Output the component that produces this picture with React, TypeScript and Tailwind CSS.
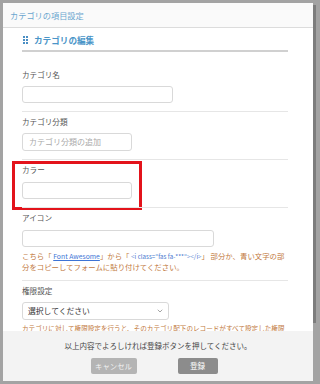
import React from 'react';
import { ChevronDown } from 'lucide-react';

const font = { fontFamily: '"Noto Sans CJK JP", "Noto Sans", sans-serif' };

const Field = ({ label, children, first }: { label: string; children: React.ReactNode; first?: boolean }) => (
  <div className={`relative ${first ? 'pt-[16px]' : 'border-t border-[#e6e6e6] pt-[3px]'} pb-[8px]`}>
    <div className="text-[7.6px] leading-[14px] text-[#555]">{label}</div>
    {children}
  </div>
);

const inputCls = 'mt-[4px] h-[17px] rounded-[3px] border border-[#d9d9d9] bg-white';

export default function App() {
  return (
    <div className="w-[320px] h-[384px] bg-[#a3a3a3] pt-[3px] pl-[3px] overflow-hidden" style={font}>
      <div className="relative w-[310px] h-[378px] flex flex-col bg-white">
        {/* scrollbar */}
        <div className="absolute -right-[3px] top-[2px] w-[3px] h-[318px] bg-[#7d7d7d]" />

        <div className="h-[25px] shrink-0 bg-[#fafafa] border-b border-[#dcdcdc] flex items-center pl-[7px]">
          <span className="text-[8.2px] text-[#6aa6cf]">カテゴリの項目設定</span>
        </div>

        <div className="flex-1 overflow-hidden pl-[19px] pr-[25px] pt-[4px]">
          <div className="flex items-center gap-[6px] pb-[2px] border-b-2 border-[#d0d0d0]">
            <svg width="5" height="9" viewBox="0 0 5 9" className="ml-[1px]">
              {[0, 3, 6].map((y) => (
                <g key={y} fill="#4a8fc4">
                  <rect x="0" y={y} width="2" height="2" />
                  <rect x="3" y={y} width="2" height="2" />
                </g>
              ))}
            </svg>
            <span className="text-[8.6px] leading-[16px] font-bold text-[#4a95c8]">カテゴリの編集</span>
          </div>

          <Field label="カテゴリ名" first>
            <div className={`${inputCls} w-[151px]`} />
          </Field>

          <Field label="カテゴリ分類">
            <div className={`${inputCls} w-[110px] h-[18px] flex items-center px-[6px] text-[8px] text-[#aaa]`}>
              カテゴリ分類の追加
            </div>
          </Field>

          <Field label="カラー">
            <div className={`${inputCls} w-[110px] mt-[5px]`} />
            <div className="absolute top-[1px] -left-[10px] w-[130px] h-[49px] border-[3px] border-[#e3131b]" />
          </Field>

          <Field label="アイコン">
            <div className={`${inputCls} w-[192px] mt-[5px]`} />
            <p className="mt-[4px] text-[7.4px] leading-[10px] text-[#c27a42]">
              こちら「 <span className="text-[#3d74d6] underline text-[6.8px]">Font Awesome</span>」から「{' '}
              <span className="text-[#4a7ad0] text-[6.2px]">&lt;i class="fas fa-***"&gt;&lt;/i&gt;</span>」 部分か、青い文字の部分をコピーしてフォームに貼り付けてください。
            </p>
          </Field>

          <Field label="権限設定">
            <div className="mt-[4px] h-[18px] w-[147px] rounded-[3px] border border-[#d9d9d9] flex items-center justify-between pl-[5px] pr-[4px]">
              <span className="text-[7.8px] text-[#333]">選択してください</span>
              <ChevronDown className="w-[8px] h-[8px] text-[#777]" strokeWidth={2} />
            </div>
            <p className="mt-[3px] text-[6.6px] leading-[10px] text-[#c27a42]">
              カテゴリに対して権限設定を行うと、そのカテゴリ配下のレコードがすべて設定した権限になります。
            </p>
          </Field>
        </div>

        <div className="h-[50px] shrink-0 bg-[#f3f3f3] flex flex-col items-center pt-[8px]">
          <div className="text-[7.5px] leading-[14px] text-[#444]">以上内容でよろしければ登録ボタンを押してください。</div>
          <div className="mt-[5px] flex gap-[41px] pr-[8px]">
            <button className="w-[46px] h-[16px] rounded-[2px] bg-[#b4b4b4] text-[7.4px] text-[#f2f2f2] leading-[16px]">キャンセル</button>
            <button className="w-[40px] h-[16px] rounded-[2px] bg-[#8c8c8c] text-[7.6px] text-white leading-[16px]">登録</button>
          </div>
        </div>
      </div>
    </div>
  );
}
